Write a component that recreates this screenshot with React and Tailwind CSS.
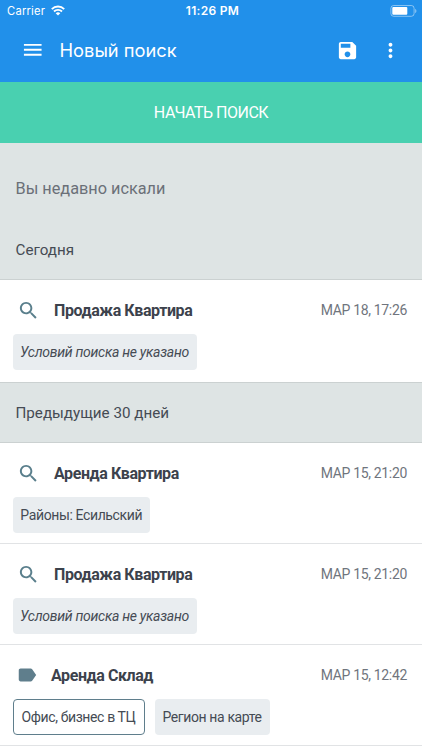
import React from 'react';

const paths = {
  menu: 'M3 18h18v-2H3v2zm0-5h18v-2H3v2zm0-7v2h18V6H3z',
  save: 'M17 3H5c-1.11 0-2 .9-2 2v14c0 1.1.89 2 2 2h14c1.1 0 2-.9 2-2V7l-4-4zm-5 16c-1.66 0-3-1.34-3-3s1.34-3 3-3 3 1.34 3 3-1.34 3-3 3zm3-10H5V5h10v4z',
  more: 'M12 8c1.1 0 2-.9 2-2s-.9-2-2-2-2 .9-2 2 .9 2 2 2zm0 2c-1.1 0-2 .9-2 2s.9 2 2 2 2-.9 2-2-.9-2-2-2zm0 6c-1.1 0-2 .9-2 2s.9 2 2 2 2-.9 2-2-.9-2-2-2z',
  search: 'M15.5 14h-.79l-.28-.27C15.41 12.59 16 11.11 16 9.5 16 5.91 13.09 3 9.5 3S3 5.91 3 9.5 5.91 16 9.5 16c1.61 0 3.09-.59 4.23-1.57l.27.28v.79l5 4.99L20.49 19l-4.99-5zm-6 0C7.01 14 5 11.99 5 9.5S7.01 5 9.5 5 14 7.01 14 9.5 11.99 14 9.5 14z',
  label: 'M17.63 5.84C17.27 5.33 16.67 5 16 5L5 5.01C3.9 5.01 3 5.9 3 7v10c0 1.1.9 1.99 2 1.99L16 19c.67 0 1.27-.33 1.63-.84L22 12l-4.37-6.16z',
};

function Icon({ name, className }) {
  return (
    <svg viewBox="0 0 24 24" fill="currentColor" className={`shrink-0 ${className}`}>
      <path d={paths[name]} />
    </svg>
  );
}

function StatusBar() {
  return (
    <div className="grid h-[22px] grid-cols-3 items-center pl-[7px] pr-[5px] font-['Inter','Liberation_Sans',sans-serif] leading-none">
      <div className="flex items-center gap-[6px]">
        <span className="pt-px text-[11.2px] tracking-[0.22px]">Carrier</span>
        <svg viewBox="0 0 14 11" fill="none" stroke="currentColor" strokeWidth="1.9" className="h-[11px] w-[14px]">
          <path d="M0.8 4.1a8.8 8.8 0 0 1 12.4 0" />
          <path d="M3 6.5a5.7 5.7 0 0 1 8 0" />
          <path d="M7 10.6 4.7 8.3a3.3 3.3 0 0 1 4.6 0z" fill="currentColor" stroke="none" />
        </svg>
      </div>
      <div className="pl-px text-center text-[12px] font-semibold tracking-[0.3px]">11:26 PM</div>
      <svg viewBox="0 0 27 12" className="h-[12px] w-[27px] justify-self-end">
        <rect x="0.9" y="0.5" width="23.2" height="10.8" rx="2.8" fill="none" stroke="white" strokeOpacity="0.45" />
        <rect x="2.3" y="2" width="15" height="7.8" rx="1" fill="white" />
        <path d="M25.2 4v4c.8-.3 1.2-1.1 1.2-2s-.4-1.7-1.2-2z" fill="white" fillOpacity="0.5" />
      </svg>
    </div>
  );
}

function Chip({ children, className }) {
  return (
    <span className={`flex h-9 items-center justify-center rounded-[4px] text-[14px] whitespace-nowrap text-[#454b54] ${className}`}>
      {children}
    </span>
  );
}

function SearchRow({ icon = 'search', title, date, children, className = '' }) {
  return (
    <div className={`bg-white pt-[18px] ${className}`}>
      <div className="flex h-6 items-center pr-[15px]">
        <Icon
          name={icon}
          className={icon === 'label' ? 'ml-4 mr-[13px] h-[22px] w-[22px] text-[#5f7e8c]' : 'ml-[16.5px] mr-[14.5px] h-[23px] w-[23px] text-[#5a7f8c]'}
        />
        <h3 className="grow pt-px text-[16px] font-bold tracking-[-0.42px] text-[#3c424c]">{title}</h3>
        <span className="text-[14px] tracking-[-0.33px] text-[#70757d]">{date}</span>
      </div>
      <div className="mt-3 flex gap-[10px] pl-[12.5px]">{children}</div>
    </div>
  );
}

export default function App() {
  return (
    <div className="flex h-[750px] w-[422px] flex-col overflow-hidden bg-white font-['Roboto','Noto_Sans',sans-serif]">
      <header className="h-[82px] shrink-0 bg-[#2190ea] text-white">
        <StatusBar />
        <div className="flex h-14 items-center">
          <Icon name="menu" className="ml-[21px] h-[23.5px] w-[23.5px]" />
          <h1 className="ml-[15px] grow pt-[2px] font-['Inter','Liberation_Sans',sans-serif] text-[18.3px]">Новый поиск</h1>
          <Icon name="save" className="h-[23px] w-[23px]" />
          <Icon name="more" className="ml-[20px] mr-[20.5px] h-[23px] w-[23px]" />
        </div>
      </header>
      <button className="h-[61px] shrink-0 bg-[#49d0b0] text-[16px] tracking-[-0.5px] text-white">НАЧАТЬ ПОИСК</button>
      <div className="flex h-[137px] shrink-0 flex-col border-b border-[#cbd1d1] bg-[#dee4e4] px-[15.5px]">
        <h2 className="mt-[34px] text-[16.3px] leading-6 text-[#6b7078]">Вы недавно искали</h2>
        <h3 className="mt-[37px] text-[15.2px] leading-6 text-[#454b54]">Сегодня</h3>
      </div>
      <SearchRow title="Продажа Квартира" date="МАР 18, 17:26" className="h-[102px] shrink-0">
        <Chip className="w-[184px] bg-[#e9edf0] tracking-[-0.28px] italic">Условий поиска не указано</Chip>
      </SearchRow>
      <h3 className="flex h-[61px] shrink-0 items-center border-y border-[#cbd1d1] bg-[#dee4e4] px-[15.5px] pt-px text-[15.2px] text-[#454b54]">
        Предыдущие 30 дней
      </h3>
      <SearchRow title="Аренда Квартира" date="МАР 15, 21:20" className="h-[101px] shrink-0 border-b border-[#e1e3e5]">
        <Chip className="w-[137.5px] bg-[#e9edf0] tracking-[-0.38px]">Районы: Есильский</Chip>
      </SearchRow>
      <SearchRow title="Продажа Квартира" date="МАР 15, 21:20" className="h-[101px] shrink-0 border-b border-[#e1e3e5]">
        <Chip className="w-[184px] bg-[#e9edf0] tracking-[-0.28px] italic">Условий поиска не указано</Chip>
      </SearchRow>
      <SearchRow icon="label" title="Аренда Склад" date="МАР 15, 12:42" className="h-[101px] shrink-0 border-b border-[#e1e3e5]">
        <Chip className="w-[132px] border border-[#5f7e8c] bg-white tracking-[-0.38px]">Офис, бизнес в ТЦ</Chip>
        <Chip className="w-[115px] bg-[#e9edf0] tracking-[-0.38px]">Регион на карте</Chip>
      </SearchRow>
    </div>
  );
}
